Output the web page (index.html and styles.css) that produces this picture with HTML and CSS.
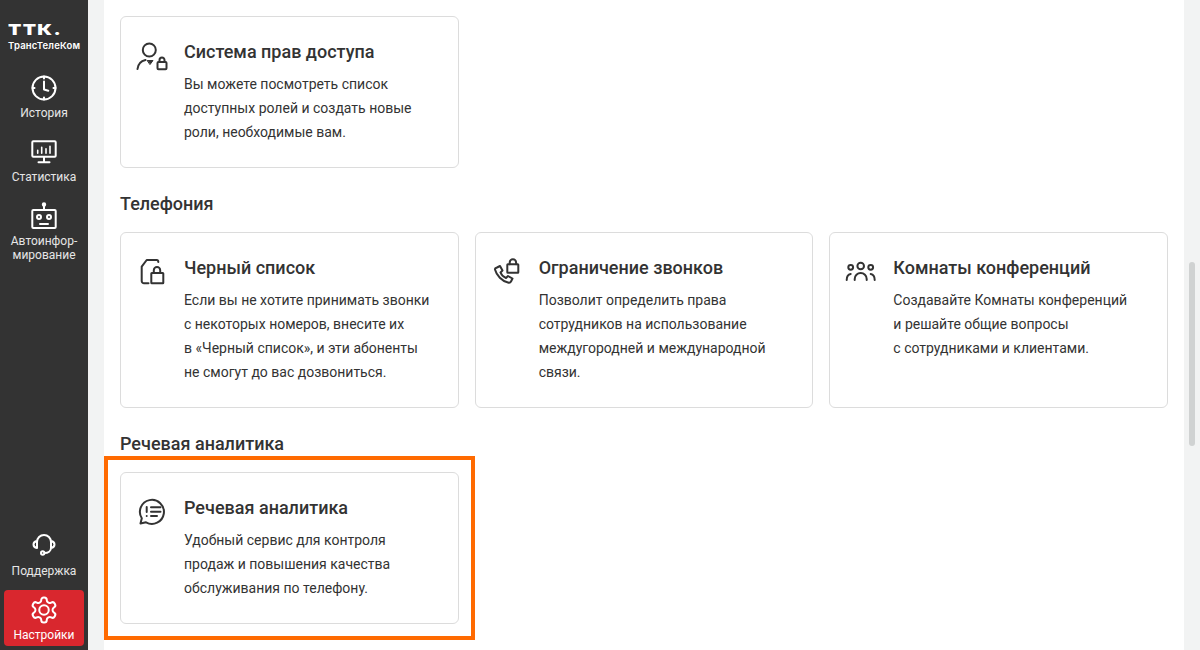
FILE: index.html
```html
<!DOCTYPE html>
<html lang="ru">
<head>
<meta charset="utf-8">
<title>Настройки</title>
<link rel="stylesheet" href="styles.css">
</head>
<body>
<div class="app">
  <nav class="sidebar">
    <div class="top">
      <div class="logo">
        <div class="logo-mark">ТТК.</div>
        <div class="logo-name">ТрансТелеКом</div>
      </div>
      <a class="nav-item">
        <svg class="nav-icon" viewBox="0 0 32 32"><circle cx="16" cy="17" r="11.500"/><path d="M16 10.500v8l4.300 1.300M16 5.500v2M16 26.500v2M4.500 17h2M25.500 17h2"/></svg>
        <span>История</span>
      </a>
      <a class="nav-item">
        <svg class="nav-icon" viewBox="0 0 32 32"><rect x="4.300" y="6.300" width="23.400" height="15.400" rx="1"/><path d="M16 22v5M10.500 27.300h11"/><path class="thin" d="M9.700 18.300v-3M13.700 18.300v-6M18 18.300v-4.500M22 18.300v-7"/></svg>
        <span>Статистика</span>
      </a>
      <a class="nav-item">
        <svg class="nav-icon" viewBox="0 0 32 32"><rect x="4.300" y="11" width="23.400" height="18" rx="1"/><path d="M16 6v5M12 25h8"/><circle cx="16" cy="5.500" r="1.200"/><circle cx="11" cy="18" r="2"/><circle cx="21" cy="18" r="2"/></svg>
        <span>Автоинфор-<br>мирование</span>
      </a>
    </div>
    <div class="bottom">
      <a class="nav-item">
        <svg class="nav-icon" viewBox="0 0 32 32"><path d="M9 12a7 7 0 0 1 14 0M9 11c-2.500.5-3.500 2-3.500 3.500S6.500 17.500 9 18zM23 11c2.500.5 3.500 2 3.500 3.500s-1 3-3.500 3.500zM23 18c0 3-3 5-6.500 5"/><circle cx="14.700" cy="23" r="1.700"/></svg>
        <span>Поддержка</span>
      </a>
      <a class="nav-item active">
        <svg class="nav-icon" viewBox="0 0 32 32"><g transform="translate(1 1) scale(1.25)"><path class="thin" d="M12.220 2h-.44a2 2 0 0 0-2 2v.18a2 2 0 0 1-1 1.730l-.43.25a2 2 0 0 1-2 0l-.15-.08a2 2 0 0 0-2.730.73l-.22.38a2 2 0 0 0 .73 2.730l.15.1a2 2 0 0 1 1 1.720v.51a2 2 0 0 1-1 1.740l-.15.09a2 2 0 0 0-.73 2.730l.22.38a2 2 0 0 0 2.730.73l.15-.08a2 2 0 0 1 2 0l.43.25a2 2 0 0 1 1 1.730V20a2 2 0 0 0 2 2h.44a2 2 0 0 0 2-2v-.18a2 2 0 0 1 1-1.730l.43-.25a2 2 0 0 1 2 0l.15.08a2 2 0 0 0 2.730-.73l.22-.39a2 2 0 0 0-.73-2.730l-.15-.08a2 2 0 0 1-1-1.740v-.5a2 2 0 0 1 1-1.740l.15-.09a2 2 0 0 0 .73-2.730l-.22-.38a2 2 0 0 0-2.730-.73l-.15.08a2 2 0 0 1-2 0l-.43-.25a2 2 0 0 1-1-1.730V4a2 2 0 0 0-2-2z"/><circle class="thin" cx="12" cy="12" r="3.800"/></g></svg>
        <span>Настройки</span>
      </a>
    </div>
  </nav>
  <div class="gutter"></div>
  <main class="main">
    <div class="grid">
      <article class="card">
        <svg class="card-icon" viewBox="0 0 32 32"><circle cx="13.300" cy="10" r="6.500"/><path d="M1.500 29C2 24.500 5 21 9.500 20"/><path class="solid" d="M11.500 20.500h5.500l-2.800 3.800z"/><rect x="21.500" y="22" width="9" height="7.300" rx="1"/><path d="M23.500 22v-2a2.500 2.500 0 0 1 5 0v2"/></svg>
        <div class="card-body">
          <h3>Система прав доступа</h3>
          <p>Вы можете посмотреть список<br>доступных ролей и создать новые<br>роли, необходимые вам.</p>
        </div>
      </article>
    </div>
    <h2>Телефония</h2>
    <div class="grid">
      <article class="card">
        <svg class="card-icon" viewBox="0 0 32 32"><path d="M12.500 27.300H8a2.300 2.300 0 0 1-2.300-2.300V10.700L10.700 4h10q1.600 0 1.600 2"/><rect x="15.300" y="17" width="12" height="10.300" rx=".5"/><path d="M17.800 17v-2.700a3.200 3.200 0 0 1 6.400 0V17"/></svg>
        <div class="card-body">
          <h3>Черный список</h3>
          <p>Если вы не хотите принимать звонки<br>с некоторых номеров, внесите их<br>в «Черный список», и эти абоненты<br>не смогут до вас дозвониться.</p>
        </div>
      </article>
      <article class="card">
        <svg class="card-icon" viewBox="0 0 32 32"><path d="M6 11.500L9 10l2.500 4.500-2 2c1 2.500 3 4.500 5.500 5.500l2-2 4.500 2.500-1.500 3c-.5 1-2 1.300-3 1C11 25 5.500 19.500 4 13.500c-.3-1 .8-1.600 2-2z"/><rect x="16.300" y="8.300" width="11" height="8.400" rx=".5"/><path d="M18.700 8.300V6.500a3.200 3.200 0 0 1 6.400 0v1.800"/></svg>
        <div class="card-body">
          <h3>Ограничение звонков</h3>
          <p>Позволит определить права<br>сотрудников на использование<br>междугородней и международной<br>связи.</p>
        </div>
      </article>
      <article class="card">
        <svg class="card-icon" viewBox="0 0 32 32"><circle cx="15.700" cy="10" r="3.300"/><circle cx="5.700" cy="11.300" r="2.400"/><circle cx="25.700" cy="11.300" r="2.400"/><path d="M9.700 24v-1a6 6 0 0 1 12 0v1M1.700 24c0-3 1.500-5.500 4-6M29.700 24c0-3-1.500-5.500-4-6"/></svg>
        <div class="card-body">
          <h3>Комнаты конференций</h3>
          <p>Создавайте Комнаты конференций<br>и решайте общие вопросы<br>с сотрудниками и клиентами.</p>
        </div>
      </article>
    </div>
    <h2>Речевая аналитика</h2>
    <div class="grid">
      <article class="card highlighted">
        <svg class="card-icon" viewBox="0 0 32 32"><path d="M4.500 27.500l1.300-5.200A12 12 0 1 1 10 26.300z"/><path d="M10.700 11v5M15 11.300h9.500M15 15.700h9.500M15 20h6M10.700 20v.1"/></svg>
        <div class="card-body">
          <h3>Речевая аналитика</h3>
          <p>Удобный сервис для контроля<br>продаж и повышения качества<br>обслуживания по телефону.</p>
        </div>
      </article>
    </div>
  </main>
  <div class="track"><div class="thumb"></div></div>
</div>
</body>
</html>
```
FILE: styles.css
```css
* { box-sizing: border-box; }
html, body { margin: 0; height: 650px; overflow: hidden; }
body { font-family: Roboto, "Liberation Sans", sans-serif; color: #333; background: #fff; }
.app { display: flex; height: 650px; }

.sidebar {
  width: 88px;
  flex: none;
  background: #333;
  color: #e6e6e6;
  display: flex;
  flex-direction: column;
  justify-content: space-between;
  padding: 0 4px 4px;
}
.top, .bottom { display: flex; flex-direction: column; gap: 8px; }
.logo { height: 59px; padding: 21px 0 0 4px; color: #fff; }
.logo-mark {
  font: 900 15px/17px Inter, Roboto, sans-serif;
  letter-spacing: 1px;
  transform: scaleX(1.3);
  transform-origin: left center;
}
.logo-name { font: 600 9.500px/12px Inter, Roboto, sans-serif; margin-top: 2px; white-space: nowrap; letter-spacing: .2px; }
.nav-item {
  display: flex;
  flex-direction: column;
  align-items: center;
  min-height: 56px;
  padding: 4px 0;
  border-radius: 4px;
  font-size: 12px;
  line-height: 14px;
  text-align: center;
}
.nav-item span { margin-top: 2px; }
.top .nav-item { padding-bottom: 3px; }
.top .nav-item span { margin-top: 3px; }
.nav-item.active { background: #d9272e; color: #fff; }
.nav-icon { width: 32px; height: 32px; flex: none; fill: none; stroke: #fff; stroke-width: 2; stroke-linecap: round; stroke-linejoin: round; }
.thin { stroke-width: 1.600; }

.gutter { width: 16px; flex: none; background: #f2f3f3; }
.main { flex: 1; padding: 16px 16px 0; min-width: 0; }
.track { width: 16px; flex: none; background: #f2f3f3; padding: 262px 5px 0; }
.thumb { width: 6px; height: 184px; border-radius: 3px; background: #d0d2d2; }

.grid { display: grid; grid-template-columns: repeat(3, 1fr); gap: 16px; }
h2 { margin: 24px 0 16px; font-size: 18px; line-height: 24px; font-weight: 500; color: #333; }
.card {
  position: relative;
  display: flex;
  gap: 16px;
  padding: 23px 15px;
  background: #fff;
  border: 1px solid #dcdcdc;
  border-radius: 6px;
}
.highlighted::after {
  content: "";
  position: absolute;
  inset: -17px;
  border: 4px solid #ff6a00;
}
.card-icon { width: 32px; height: 32px; flex: none; fill: none; stroke: #333; stroke-width: 2; stroke-linecap: round; stroke-linejoin: round; }
.card-icon .solid { fill: #333; stroke-width: 1; }
.card-body { min-width: 0; }
h3 { margin: 0 0 8px; font-size: 18px; line-height: 24px; font-weight: 500; }
p { margin: 0; font-size: 14px; line-height: 24px; white-space: nowrap; }
```
